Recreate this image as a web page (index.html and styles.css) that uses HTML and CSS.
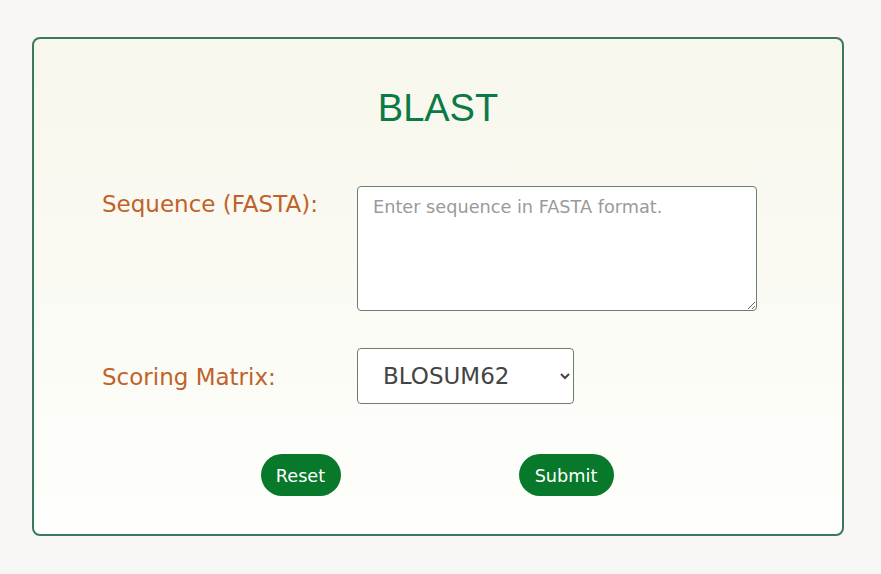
FILE: index.html
```html
<!DOCTYPE html>
<html>
<head>
<meta charset="utf-8">
<link rel="stylesheet" href="styles.css">
</head>
<body>
<div class="card">
  <h1 class="title">BLAST</h1>
  <form class="form">
    <div class="row row-top">
      <label class="label" for="seq">Sequence (FASTA):</label>
      <textarea id="seq" class="seq" placeholder="Enter sequence in FASTA format."></textarea>
    </div>
    <div class="row row-mid">
      <label class="label" for="mat">Scoring Matrix:</label>
      <select id="mat" class="matrix">
        <option>BLOSUM62</option>
      </select>
    </div>
    <div class="actions">
      <button type="reset" class="btn btn-reset">Reset</button>
      <button type="button" class="btn btn-submit">Submit</button>
    </div>
  </form>
</div>
</body>
</html>
```
FILE: styles.css
```css
html, body {
  margin: 0;
  padding: 0;
  background: #f8f7f5;
}
body {
  padding: 37px 0 0 32px;
  font-family: "DejaVu Sans", Verdana, sans-serif;
}
.card {
  box-sizing: border-box;
  width: 812px;
  height: 499px;
  border: 2px solid #3a7a5a;
  border-radius: 8px;
  background: linear-gradient(to bottom, #f7f7ec 0%, #fefefc 100%);
}
.title {
  margin: 47px 0 0 0;
  text-align: center;
  font-family: "Liberation Sans", Arial, sans-serif;
  font-weight: normal;
  font-size: 38px;
  line-height: 44px;
  color: #0b7a46;
}
.form {
  margin-top: 56px;
}
.row {
  display: grid;
  grid-template-columns: 255px auto;
  padding-left: 68px;
}
.row-top {
  align-items: start;
}
.row-mid {
  align-items: center;
  margin-top: 37px;
}
.label {
  font-size: 23px;
  color: #c0622a;
  line-height: 30px;
}
.row-top .label {
  margin-top: 3px;
}
.row-mid .label {
  margin-top: 2px;
}
.seq {
  box-sizing: border-box;
  width: 400px;
  height: 125px;
  border: 1px solid #6b7f6e;
  border-radius: 4px;
  padding: 10px 15px;
  font-family: "DejaVu Sans", Verdana, sans-serif;
  font-size: 17.7px;
  background: #fff;
  resize: both;
}
.seq::placeholder {
  color: #9a9a9a;
}
.matrix {
  box-sizing: border-box;
  width: 217px;
  height: 56px;
  border: 1px solid #6b7f6e;
  border-radius: 4px;
  padding: 0 0 0 21px;
  font-family: "DejaVu Sans", Verdana, sans-serif;
  font-size: 23px;
  color: #444;
  background: #fff;
}
.actions {
  display: flex;
  justify-content: center;
  gap: 178px;
  margin-top: 50px;
  padding-right: 2px;
}
.btn {
  height: 42px;
  border: none;
  border-radius: 21px;
  background: #08782a;
  color: #fff;
  font-family: "DejaVu Sans", Verdana, sans-serif;
  font-size: 17.7px;
  padding: 1px 0 0 0;
}
.btn-reset { width: 80px; }
.btn-submit { width: 95px; }
```
